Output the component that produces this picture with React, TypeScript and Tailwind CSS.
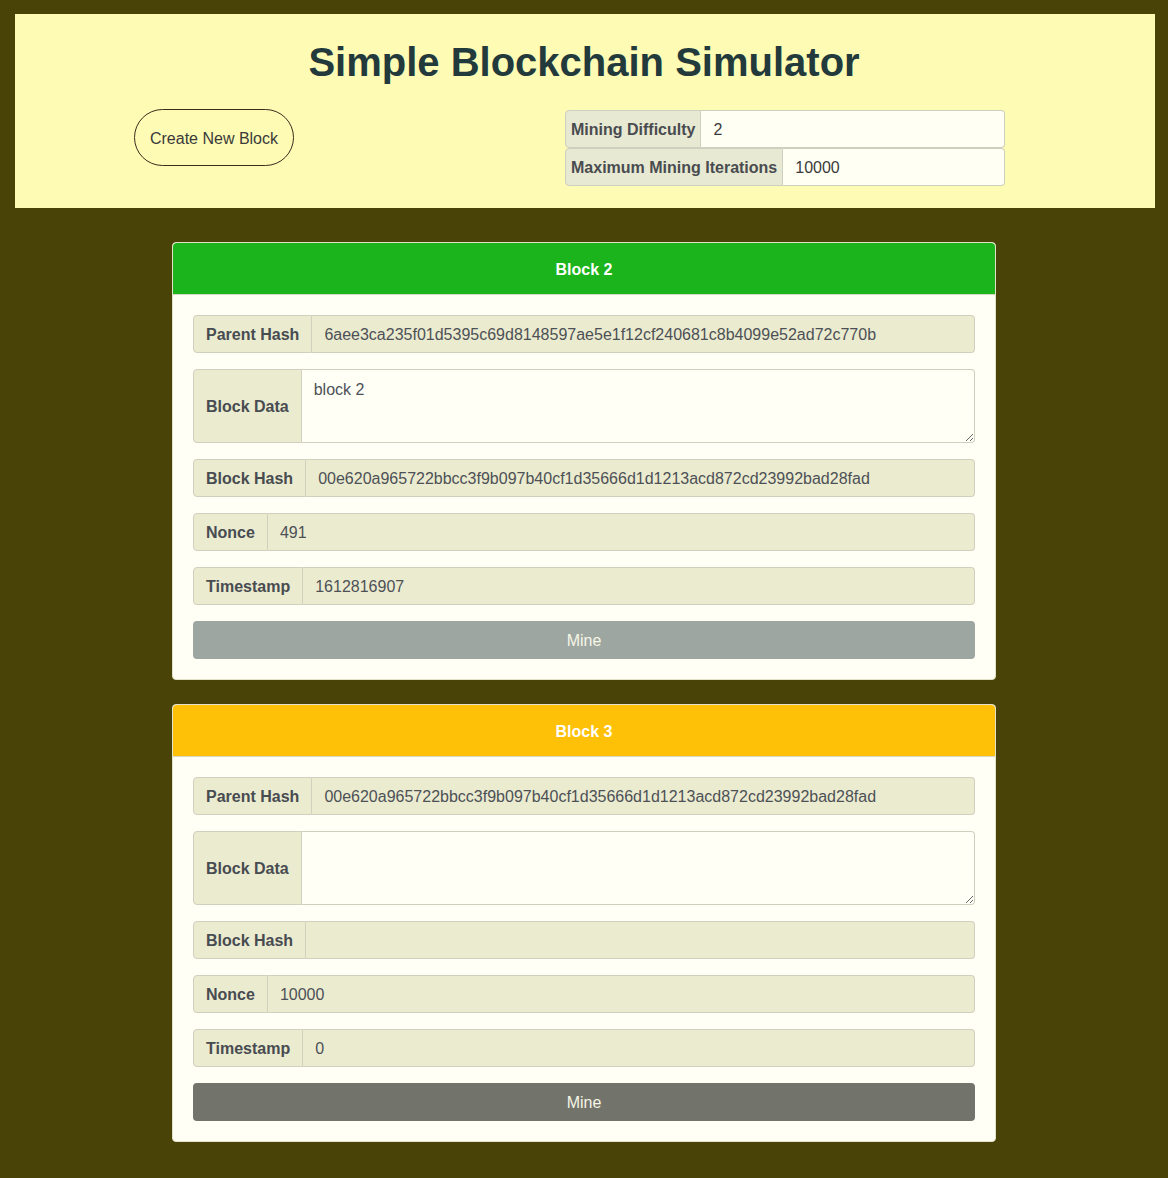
import { useState } from 'react'

type Block = {
  id: number
  parentHash: string
  data: string
  hash: string
  nonce: string
  timestamp: string
  mined: boolean
}

const initialBlocks: Block[] = [
  {
    id: 2,
    parentHash: '6aee3ca235f01d5395c69d8148597ae5e1f12cf240681c8b4099e52ad72c770b',
    data: 'block 2',
    hash: '00e620a965722bbcc3f9b097b40cf1d35666d1d1213acd872cd23992bad28fad',
    nonce: '491',
    timestamp: '1612816907',
    mined: true,
  },
  {
    id: 3,
    parentHash: '00e620a965722bbcc3f9b097b40cf1d35666d1d1213acd872cd23992bad28fad',
    data: '',
    hash: '',
    nonce: '10000',
    timestamp: '0',
    mined: false,
  },
]

function Field({ label, value }: { label: string; value: string }) {
  return (
    <div className="flex h-[38px] mb-4">
      <div className="flex items-center pt-[2px] px-3 font-bold text-[#484c50] bg-[#ebebd0] border border-[#cfd0bd] rounded-l">
        {label}
      </div>
      <div className="flex-1 flex items-center pt-[2px] px-3 text-[#4d5156] bg-[#ebebd0] border border-l-0 border-[#cfd0bd] rounded-r">
        {value}
      </div>
    </div>
  )
}

function BlockCard({ block, onData }: { block: Block; onData: (v: string) => void }) {
  return (
    <div className="w-[824px] mx-auto bg-[#fffff6] border border-[#e2e2c8] rounded mb-6">
      <div
        className={
          'h-[52px] flex items-center justify-center pt-[2px] font-bold text-white rounded-t border-b border-[#d8d8c0] ' +
          (block.mined ? 'bg-[#1cb41c]' : 'bg-[#ffc107]')
        }
      >
        Block {block.id}
      </div>
      <div className="p-5">
        <Field label="Parent Hash" value={block.parentHash} />
        <div className="flex h-[74px] mb-4">
          <div className="flex items-center pt-[2px] px-3 font-bold text-[#484c50] bg-[#ebebd0] border border-[#cfd0bd] rounded-l">
            Block Data
          </div>
          <textarea
            className="flex-1 px-3 pt-2 pb-1.5 text-[#4d5156] bg-[#fffff6] border border-l-0 border-[#cfd0bd] rounded-r outline-none"
            value={block.data}
            onChange={(e) => onData(e.target.value)}
          />
        </div>
        <Field label="Block Hash" value={block.hash} />
        <Field label="Nonce" value={block.nonce} />
        <Field label="Timestamp" value={block.timestamp} />
        <button
          className={
            'w-full h-[38px] pt-[2px] rounded text-[#f6f6e6] ' +
            (block.mined ? 'bg-[#9ea6a2]' : 'bg-[#72736b]')
          }
        >
          Mine
        </button>
      </div>
    </div>
  )
}

export default function App() {
  const [blocks, setBlocks] = useState(initialBlocks)
  const [difficulty, setDifficulty] = useState('2')
  const [iterations, setIterations] = useState('10000')

  const updateData = (id: number, v: string) => {
    setBlocks(blocks.map((b) => (b.id === id ? { ...b, data: v } : b)))
  }

  return (
    <div
      className="min-h-[1178px] bg-[#4a4307] pt-[14px] pb-[12px] text-base"
      style={{ fontFamily: '"Liberation Sans", Arial, sans-serif' }}
    >
      <div className="w-[1140px] ml-[15px] bg-[#fdfbb4] pl-[14px] pr-[16px] pt-6 pb-[22px] mb-[34px]">
        <h1 className="text-[40px] leading-[48px] font-bold text-center text-[#233a3c] mb-[23px]">
          Simple Blockchain Simulator
        </h1>
        <div className="flex items-start">
          <div className="w-[370px] flex justify-center">
            <button className="w-[160px] h-[57px] pt-[3px] rounded-full border border-[#3b2c1c] text-[#3a3a3a]">
              Create New Block
            </button>
          </div>
          <div className="w-[440px] ml-[166px] mt-px">
            <div className="flex h-[38px]">
              <div className="flex items-center pt-[2px] px-[5px] font-bold text-[#484c50] bg-[#e8e9d2] border border-[#cfcfc0] rounded-l">
                Mining Difficulty
              </div>
              <input
                className="flex-1 min-w-0 px-3 pt-[2px] text-[#3a3a3a] bg-[#fffff4] border border-l-0 border-[#cfcfc0] rounded-r outline-none"
                value={difficulty}
                onChange={(e) => setDifficulty(e.target.value)}
              />
            </div>
            <div className="flex h-[38px]">
              <div className="flex items-center pt-[2px] px-[5px] font-bold text-[#484c50] bg-[#e8e9d2] border border-[#cfcfc0] rounded-l">
                Maximum Mining Iterations
              </div>
              <input
                className="flex-1 min-w-0 px-3 pt-[2px] text-[#3a3a3a] bg-[#fffff4] border border-l-0 border-[#cfcfc0] rounded-r outline-none"
                value={iterations}
                onChange={(e) => setIterations(e.target.value)}
              />
            </div>
          </div>
        </div>
      </div>
      {blocks.map((b) => (
        <BlockCard key={b.id} block={b} onData={(v) => updateData(b.id, v)} />
      ))}
    </div>
  )
}
